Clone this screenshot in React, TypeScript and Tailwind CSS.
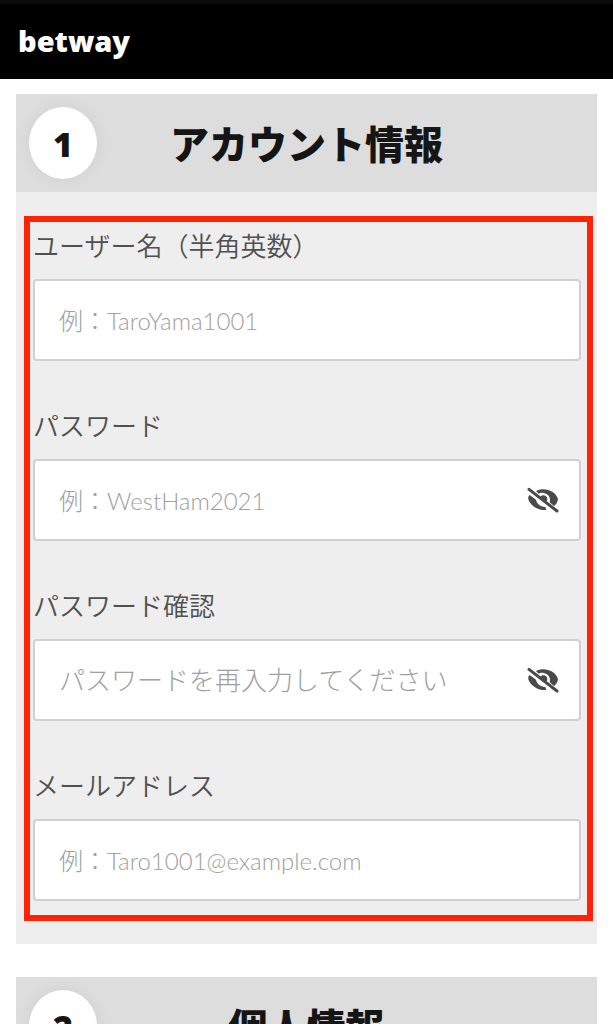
import { useState } from "react";

type Field = {
  id: string;
  label: string;
  placeholder: string;
  type: "text" | "password" | "email";
  // Latin sample values are set a little smaller than Japanese hints
  latinSample?: boolean;
};

const accountFields: Field[] = [
  {
    id: "username",
    label: "ユーザー名（半角英数）",
    placeholder: "例：TaroYama1001",
    type: "text",
    latinSample: true,
  },
  {
    id: "password",
    label: "パスワード",
    placeholder: "例：WestHam2021",
    type: "password",
    latinSample: true,
  },
  {
    id: "password-confirm",
    label: "パスワード確認",
    placeholder: "パスワードを再入力してください",
    type: "password",
  },
  {
    id: "email",
    label: "メールアドレス",
    placeholder: "例：Taro1001@example.com",
    type: "email",
    latinSample: true,
  },
];

function EyeOffIcon() {
  return (
    <svg viewBox="0 0 96 78" className="h-[26px] w-8" aria-hidden="true">
      <path
        d="M27 12C50 0 84 9 93 36C92 46 87 53 81 57L68 46C72 31 63 20 50 18C43 17 38 18 35 20Z"
        fill="#4a4a4a"
      />
      <path
        d="M8 24C2 29 3 36 6 42C16 60 36 71 58 69L55 60C38 58 29 49 27 38Z"
        fill="#4a4a4a"
      />
      <path d="M40 30C44 21 61 24 61 36C61 40 59 44 57 45Z" fill="#4a4a4a" />
      <path
        d="M6 7L90 72"
        stroke="#4a4a4a"
        strokeWidth="9"
        strokeLinecap="round"
      />
    </svg>
  );
}

function StepHeader({ step, title }: { step: number; title: string }) {
  return (
    <header className="grid h-[98px] grid-cols-[1fr_auto_1fr] items-center bg-[#dddddd] px-[13px]">
      <span className="flex h-[72px] w-[68px] items-center justify-center rounded-[50%] bg-white pt-0.5 font-['Noto_Sans'] text-[34px] font-black text-[#151515] shadow-[0_0_16px_rgba(0,0,0,0.06)]">
        {step}
      </span>
      <h2 className="pt-0.5 text-[39px] leading-[56px] font-black text-[#151515]">
        {title}
      </h2>
    </header>
  );
}

function FormField({ field }: { field: Field }) {
  const [visible, setVisible] = useState(false);
  const isPassword = field.type === "password";

  return (
    <div>
      <label
        htmlFor={field.id}
        className="mb-[13px] block text-[26px] leading-10 font-[350] text-[#505050]"
      >
        {field.label}
      </label>
      <div className="flex h-[82px] items-center rounded-sm border-2 border-[#d0d0d0] bg-white pr-5 pl-6">
        <input
          id={field.id}
          type={isPassword && visible ? "text" : field.type}
          placeholder={field.placeholder}
          className={`h-full min-w-0 flex-1 bg-transparent font-light text-[#484848] outline-none placeholder:text-[#a0a0a0] ${
            field.latinSample ? "text-[24px]" : "text-[26px]"
          }`}
        />
        {isPassword && (
          <button
            type="button"
            aria-label="パスワードを表示"
            onClick={() => setVisible(!visible)}
          >
            <EyeOffIcon />
          </button>
        )}
      </div>
    </div>
  );
}

export default function App() {
  return (
    <div className="min-h-screen bg-white font-['Lato','Noto_Sans_CJK_JP',sans-serif]">
      <header className="flex h-[79px] items-center border-t-4 border-[#0c0c0c] bg-black px-[18px] pb-0.5">
        <a
          href="#"
          className="font-['Noto_Sans'] text-[29px] leading-10 font-black text-white"
        >
          betway
        </a>
      </header>

      <main className="space-y-[33px] px-4 pt-[15px]">
        <section>
          <StepHeader step={1} title="アカウント情報" />
          <div className="bg-[#eeeeee] pt-6 pr-1 pb-[23px] pl-2">
            <form className="space-y-[45px] border-[6px] border-[#ff2206] pt-1 pr-[6px] pb-[14px] pl-[3px]">
              {accountFields.map((field) => (
                <FormField key={field.id} field={field} />
              ))}
            </form>
          </div>
        </section>

        <section>
          <StepHeader step={2} title="個人情報" />
        </section>
      </main>
    </div>
  );
}
